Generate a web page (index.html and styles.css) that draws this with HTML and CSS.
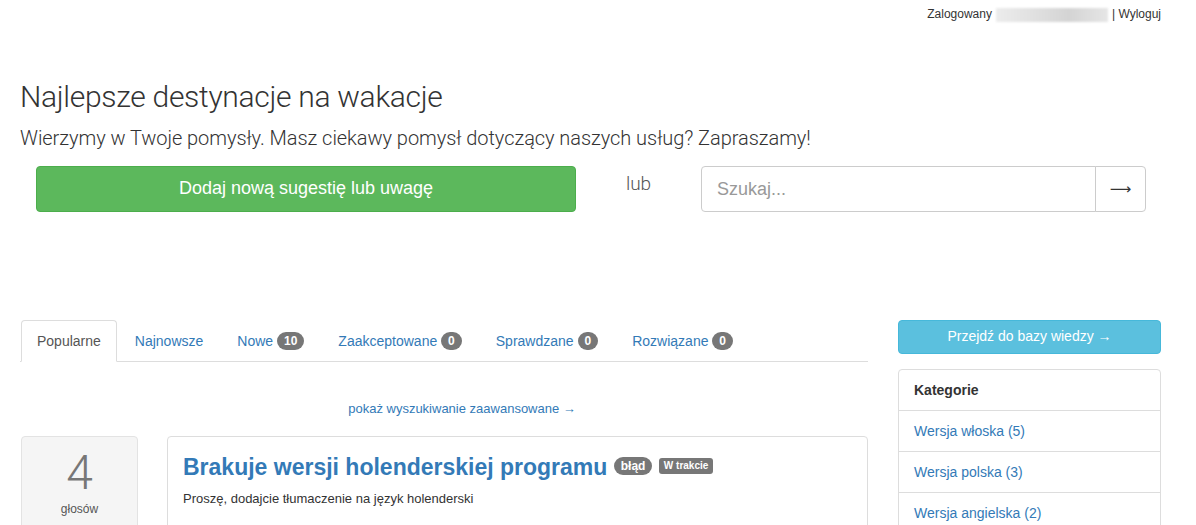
FILE: index.html
```html
<!DOCTYPE html>
<html lang="pl">
<head>
<meta charset="utf-8">
<title>Najlepsze destynacje na wakacje</title>
<link rel="stylesheet" href="styles.css">
</head>
<body>
<div class="page">
  <div class="userbar">
    <span>Zalogowany</span><span class="blurred"></span><span>| <a href="#" class="plain">Wyloguj</a></span>
  </div>

  <header class="hero">
    <h1>Najlepsze destynacje na wakacje</h1>
    <p class="lead">Wierzymy w Twoje pomysły. Masz ciekawy pomysł dotyczący naszych usług? Zapraszamy!</p>
    <div class="actions">
      <a href="#" class="btn-add">Dodaj nową sugestię lub uwagę</a>
      <div class="or">lub</div>
      <form class="search">
        <input type="text" placeholder="Szukaj...">
        <button type="button">⟶</button>
      </form>
    </div>
  </header>

  <div class="main">
    <div class="content">
      <ul class="tabs">
        <li class="active"><a href="#">Popularne</a></li>
        <li><a href="#">Najnowsze</a></li>
        <li><a href="#">Nowe <span class="badge">10</span></a></li>
        <li><a href="#">Zaakceptowane <span class="badge">0</span></a></li>
        <li><a href="#">Sprawdzane <span class="badge">0</span></a></li>
        <li><a href="#">Rozwiązane <span class="badge">0</span></a></li>
      </ul>
      <div class="advanced"><a href="#">pokaż wyszukiwanie zaawansowane →</a></div>

      <div class="item">
        <div class="votes">
          <div class="count">4</div>
          <div class="label">głosów</div>
        </div>
        <div class="card">
          <h2><a href="#">Brakuje wersji holenderskiej programu</a> <span class="badge tag">błąd</span> <span class="status">W trakcie</span></h2>
          <p>Proszę, dodajcie tłumaczenie na język holenderski</p>
        </div>
      </div>
    </div>

    <aside class="sidebar">
      <a href="#" class="btn-kb">Przejdź do bazy wiedzy →</a>
      <div class="panel">
        <div class="panel-head">Kategorie</div>
        <a href="#" class="panel-row">Wersja włoska (5)</a>
        <a href="#" class="panel-row">Wersja polska (3)</a>
        <a href="#" class="panel-row">Wersja angielska (2)</a>
      </div>
    </aside>
  </div>
</div>
</body>
</html>
```

FILE: styles.css
```css
* { box-sizing: border-box; }
html, body { margin: 0; padding: 0; background: #fff; }
body {
  font-family: "Liberation Sans", Arial, sans-serif;
  font-size: 14px;
  line-height: 1.42857;
  color: #333;
}
a { color: #337ab7; text-decoration: none; }
a.plain { color: #333; }

.page { padding: 0 35px 0 20px; }

.userbar {
  display: flex;
  justify-content: flex-end;
  align-items: center;
  gap: 4px;
  font-size: 12px;
  height: 30px;
}
.blurred {
  display: inline-block;
  width: 112px;
  height: 14px;
  background: linear-gradient(90deg, #ececec 0%, #e0e0e0 35%, #d4d4d4 65%, #e6e6e6 100%);
  filter: blur(1px);
}

.hero { padding-top: 48px; }
.hero h1 {
  font-family: "Roboto", "Liberation Sans", sans-serif;
  font-weight: 300;
  font-size: 30px;
  letter-spacing: -0.3px;
  line-height: 38px;
  margin: 0;
  color: #333;
}
.hero .lead {
  font-family: "Roboto", "Liberation Sans", sans-serif;
  font-weight: 300;
  font-size: 20px;
  letter-spacing: -0.05px;
  line-height: 28px;
  margin: 8px 0 0;
  color: #333;
}
.actions {
  display: grid;
  grid-template-columns: 540px 125px 445px;
  margin: 14px 0 0 16px;
  align-items: start;
}
.btn-add {
  display: flex;
  align-items: center;
  justify-content: center;
  height: 46px;
  background: #5cb85c;
  border: 1px solid #4cae4c;
  border-radius: 4px;
  color: #fff;
  font-size: 18px;
}
.or {
  text-align: center;
  font-family: "Roboto", "Liberation Sans", sans-serif;
  font-weight: 300;
  font-size: 19px;
  color: #555;
  padding: 4px 0 0 0;
}
.search {
  display: flex;
  height: 46px;
  margin: 0;
}
.search input {
  flex: 1;
  min-width: 0;
  height: 46px;
  border: 1px solid #ccc;
  border-radius: 4px 0 0 4px;
  padding: 0 15px;
  font-family: "Liberation Sans", Arial, sans-serif;
  font-size: 18px;
  color: #555;
  outline: none;
}
.search input::placeholder { color: #999; }
.search button {
  width: 51px;
  height: 46px;
  border: 1px solid #ccc;
  border-radius: 0 4px 4px 0;
  margin-left: -1px;
  background: #fff;
  font-family: "DejaVu Sans", sans-serif;
  font-size: 15px;
  color: #333;
  padding: 0;
}

.main {
  display: grid;
  grid-template-columns: 848px 263px;
  column-gap: 30px;
  margin-top: 108px;
}

.tabs {
  list-style: none;
  margin: 0;
  padding: 0 0 0 1px;
  display: flex;
  border-bottom: 1px solid #ddd;
}
.tabs li { margin-bottom: -1px; margin-right: 2px; }
.tabs li a {
  display: block;
  padding: 10px 15px;
  line-height: 20px;
  border: 1px solid transparent;
  border-radius: 4px 4px 0 0;
}
.tabs li.active a {
  color: #555;
  background: #fff;
  border-color: #ddd #ddd transparent;
}
.badge {
  display: inline-block;
  min-width: 10px;
  padding: 3px 7px;
  font-size: 12px;
  font-weight: bold;
  line-height: 1;
  color: #fff;
  background: #777;
  border-radius: 10px;
  text-align: center;
  vertical-align: middle;
  position: relative;
  top: -1px;
}

.advanced {
  text-align: center;
  font-size: 13px;
  margin-top: 37px;
  padding-left: 36px;
  line-height: 20px;
}

.item {
  display: grid;
  grid-template-columns: 117px 1fr;
  column-gap: 29px;
  margin-top: 17px;
  padding-left: 1px;
}
.votes {
  background: #f5f5f5;
  border: 1px solid #e3e3e3;
  border-radius: 4px;
  text-align: center;
  height: 120px;
  padding-top: 12px;
}
.votes .count {
  font-family: "Roboto", "Liberation Sans", sans-serif;
  font-weight: 300;
  font-size: 48px;
  line-height: 48px;
  color: #777;
}
.votes .label {
  font-size: 12px;
  color: #555;
  margin-top: 4px;
}
.card {
  border: 1px solid #ddd;
  border-radius: 4px;
  padding: 15px 15px;
  height: 120px;
}
.card h2 {
  margin: 0;
  font-size: 23px;
  line-height: 30px;
  font-weight: bold;
}
.card h2 .tag {
  font-size: 12px;
  padding: 3px 7px;
  vertical-align: middle;
  top: -3px;
}
.status {
  display: inline-block;
  background: #777;
  color: #fff;
  font-size: 10px;
  font-weight: bold;
  line-height: 1;
  padding: 3px 5px;
  border-radius: 3px;
  vertical-align: middle;
  position: relative;
  top: -3px;
}
.card p {
  margin: 8px 0 0;
  font-size: 13px;
}

.sidebar { display: flex; flex-direction: column; }
.btn-kb {
  display: flex;
  align-items: center;
  justify-content: center;
  height: 34px;
  background: #5bc0de;
  border: 1px solid #46b8da;
  border-radius: 4px;
  color: #fff;
  font-size: 14px;
}
.panel {
  margin-top: 15px;
  border: 1px solid #ddd;
  border-radius: 4px;
}
.panel-head {
  font-weight: bold;
  padding: 10px 15px;
  line-height: 20px;
  border-bottom: 1px solid #ddd;
}
.panel-row {
  display: block;
  padding: 10px 15px;
  line-height: 20px;
  border-bottom: 1px solid #ddd;
}
```
